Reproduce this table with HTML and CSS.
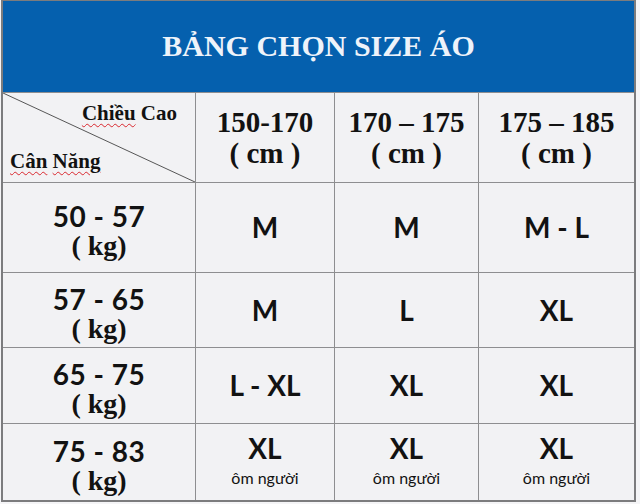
FILE: index.html
```html
<!DOCTYPE html>
<html lang="vi">
<head>
<meta charset="utf-8">
<title>Bảng chọn size áo</title>
<link rel="stylesheet" href="styles.css">
</head>
<body>
<div class="board">
  <div class="title">BẢNG CHỌN SIZE ÁO</div>

  <div class="cell corner">
    <svg class="diag" viewBox="0 0 100 100" preserveAspectRatio="none" aria-hidden="true">
      <line x1="0" y1="0" x2="100" y2="100" stroke="#555" stroke-width="1" vector-effect="non-scaling-stroke"/>
    </svg>
    <span class="corner-top"><span class="typo">Chiều</span> Cao</span>
    <span class="corner-bottom"><span class="typo">Cân</span> <span class="typo">Năng</span></span>
  </div>
  <div class="cell head"><span>150-170</span><span>( cm )</span></div>
  <div class="cell head"><span>170 – 175</span><span>( cm )</span></div>
  <div class="cell head"><span>175 – 185</span><span>( cm )</span></div>

  <div class="cell weight"><span class="w-num">50 - 57</span><span class="w-unit">( kg)</span></div>
  <div class="cell size">M</div>
  <div class="cell size">M</div>
  <div class="cell size">M - L</div>

  <div class="cell weight"><span class="w-num">57 - 65</span><span class="w-unit">( kg)</span></div>
  <div class="cell size">M</div>
  <div class="cell size">L</div>
  <div class="cell size">XL</div>

  <div class="cell weight"><span class="w-num">65 - 75</span><span class="w-unit">( kg)</span></div>
  <div class="cell size">L - XL</div>
  <div class="cell size">XL</div>
  <div class="cell size">XL</div>

  <div class="cell weight"><span class="w-num">75 - 83</span><span class="w-unit">( kg)</span></div>
  <div class="cell size"><span>XL</span><span class="note">ôm người</span></div>
  <div class="cell size"><span>XL</span><span class="note">ôm người</span></div>
  <div class="cell size"><span>XL</span><span class="note">ôm người</span></div>
</div>
</body>
</html>
```

FILE: styles.css
```css
html, body {
  margin: 0;
  padding: 0;
  background: #f5f5f7;
}

.board {
  display: grid;
  grid-template-columns: 192px 138px 143px 155px;
  grid-template-rows: 91px 89px 89px 74px 75px 76px;
  gap: 1px;
  width: max-content;
  margin-left: 1px;
  background: #8e8e90;
  border: 2px solid #7c7c7e;
  border-top-width: 1px;
  color: #121212;
}

.title {
  grid-column: 1 / -1;
  background: #0560ae;
  color: #eef3fa;
  font-family: "Liberation Serif", "Times New Roman", serif;
  font-weight: bold;
  font-size: 30px;
  display: flex;
  align-items: center;
  justify-content: center;
  padding-bottom: 2px;
}

.cell {
  background: #f2f2f4;
  display: flex;
  flex-direction: column;
  align-items: center;
  justify-content: center;
}

.corner {
  position: relative;
  align-items: stretch;
  justify-content: space-between;
  padding: 8px 0 9px 0;
  font-family: "Liberation Serif", "Times New Roman", serif;
  font-weight: bold;
  font-size: 21px;
  line-height: 24px;
}

.diag {
  position: absolute;
  inset: 0;
  width: 100%;
  height: 100%;
}

.corner-top {
  align-self: flex-end;
  padding-right: 18px;
}

.corner-bottom {
  align-self: flex-start;
  padding-left: 7px;
}

.typo {
  text-decoration: underline wavy #d9272e;
  text-decoration-thickness: 1px;
  text-underline-offset: 3px;
}

.head {
  font-family: "Liberation Serif", "Times New Roman", serif;
  font-weight: bold;
  font-size: 29px;
  line-height: 31px;
  padding-top: 1px;
}

.weight {
  padding-top: 7px;
}

.w-num {
  font-family: Lato, "Open Sans", sans-serif;
  font-weight: bold;
  font-size: 28px;
  line-height: 29px;
  letter-spacing: 0.5px;
}

.w-unit {
  font-family: "Liberation Serif", "Times New Roman", serif;
  font-weight: bold;
  font-size: 28px;
  line-height: 29px;
}

.size {
  font-family: Lato, "Open Sans", sans-serif;
  font-weight: bold;
  font-size: 28px;
  line-height: 29px;
}

.note {
  font-weight: normal;
  font-size: 16px;
  line-height: 24px;
  margin-top: 3px;
}
```
